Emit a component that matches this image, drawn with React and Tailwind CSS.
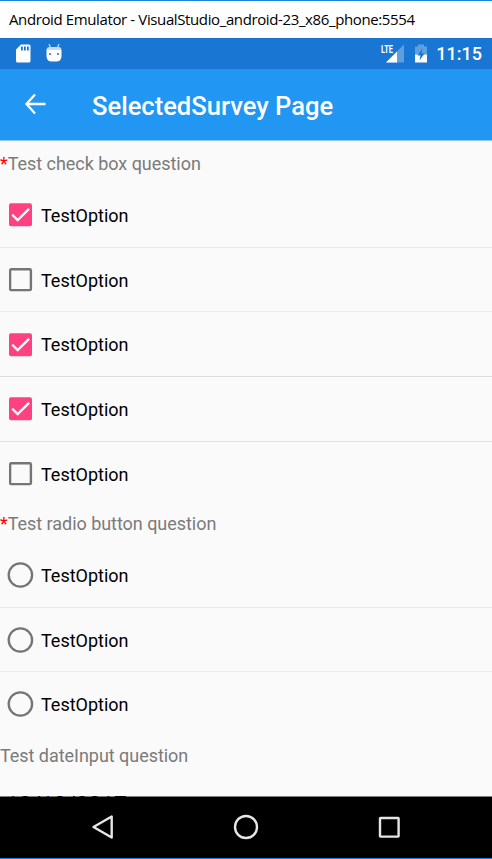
const ROBOTO = "font-[Roboto,sans-serif]";

function CheckBox({ checked }) {
  return (
    <svg className="block h-6 w-6" viewBox="0 0 24 24">
      {checked ? (
        <>
          <rect x="0" y="0.2" width="23" height="23" rx="2" fill="#ff4081" />
          <path d="M3.2 11.6 L8.7 17 L20 5.8" fill="none" stroke="#fafafa" strokeWidth="2.4" />
        </>
      ) : (
        <rect x="1.1" y="1.300" width="20.8" height="20.8" rx="1.2" fill="none" stroke="#757575" strokeWidth="2.4" />
      )}
    </svg>
  );
}

function Radio() {
  return (
    <svg className="block h-[27px] w-[27px]" viewBox="0 0 27 27">
      <circle cx="13.4" cy="13" r="11.700" fill="none" stroke="#757575" strokeWidth="2.3" />
    </svg>
  );
}

function Option({ kind, checked, size, textPad = "pt-5" }) {
  return (
    <div className={`flex shrink-0 items-start ${size}`}>
      <div className={kind === "radio" ? "ml-[7px] mr-[7px] pt-[19px]" : "ml-[9px] mr-2 pt-5"}>
        {kind === "radio" ? <Radio /> : <CheckBox checked={checked} />}
      </div>
      <span className={`text-[18px] leading-[26px] text-black ${textPad}`}>TestOption</span>
    </div>
  );
}

function Question({ required, children }) {
  return (
    <div className="h-[42px] shrink-0 pt-2.5 text-[18px] leading-[26px] tracking-[-0.04px] text-[#7a7a7a]">
      {required && <span className="text-[#ff0000]">*</span>}
      {children}
    </div>
  );
}

export default function App() {
  return (
    <div className={`flex h-[859px] w-[492px] flex-col overflow-hidden border-y border-[#1b84dc] bg-[#fafafa] ${ROBOTO}`}>
      <div className="flex h-[37px] shrink-0 items-center bg-white pl-[9px] font-['Open_Sans',sans-serif] text-[15px] tracking-[-0.38px] text-black">
        <span className="whitespace-nowrap">Android Emulator - VisualStudio_android-23_x86_phone:5554</span>
      </div>

      <div className="flex h-[31px] shrink-0 items-center bg-[#1976d2] pl-[15px] pr-[10px] text-white">
        <svg className="h-5 w-4" viewBox="0 0 16 20" fill="#fff">
          <path fillRule="evenodd" d="M6 0.500H14Q15.500 0.500 15.500 2V17Q15.500 18.500 14 18.500H2.500Q1 18.500 1 17V5.500ZM6 2.500V6.500H7.800V2.500ZM9 2.500V6.500H10.800V2.500ZM12 2.500V6.500H13.800V2.500Z" />
        </svg>
        <svg className="ml-[14px] h-5 w-[18px]" viewBox="0 0 18 20">
          <path d="M4 0L5.500 3.500M14 0L12.500 3.500" stroke="#c5dcf4" strokeWidth="1.200" />
          <path d="M1.500 6Q1.500 3 4.500 3H13.500Q16.500 3 16.500 6Z" fill="#c5dcf4" />
          <path d="M1.500 6H16.500V12Q16.500 17.500 11 17.500H7Q1.500 17.500 1.500 12Z" fill="#fff" />
          <circle cx="5" cy="10" r="1" fill="#1976d2" />
          <circle cx="13" cy="10" r="1" fill="#1976d2" />
        </svg>
        <div className="relative ml-auto h-5 w-[24px]">
          <svg className="block h-5 w-[24px]" viewBox="0 0 24 20">
            <path d="M23 0.500V18.500H5Z" fill="#5e9fe0" />
            <path d="M16 7.500V18.500H5Z" fill="#fff" />
          </svg>
          <span className="absolute -top-px left-0 h-[11px] w-[12px] bg-[#1976d2]">
            <span className="block origin-left scale-x-[0.65] text-[11.5px] font-bold leading-[12px]">LTE</span>
          </span>
        </div>
        <svg className="ml-[9px] h-5 w-[14px]" viewBox="0 0 14 20">
          <path d="M1 2.500H4V0.500H10V2.500H13V10.500H1Z" fill="#5e9fe0" />
          <path d="M1 10.500H13V18.500H1Z" fill="#fff" />
          <path d="M8.500 4.500L3.500 11.500H6.500L5.500 16.500L10.500 9.500H7.500Z" fill="#1976d2" />
        </svg>
        <span className="ml-[8px] text-[18px] font-medium leading-5">11:15</span>
      </div>

      <div className="flex h-[72px] shrink-0 items-center border-b border-[#8fc8f8] bg-[#2196f3] text-white">
        <svg className="mb-[2px] ml-[24px] h-[22px] w-[22px]" viewBox="0 0 22 22" fill="none" stroke="#fff" strokeWidth="2.300">
          <path d="M21.500 11H2.500M11 1.500L2.500 11L11 20.500" />
        </svg>
        <span className="ml-[46px] pt-0.5 text-[25.55px] font-medium leading-8">SelectedSurvey Page</span>
      </div>

      <div className="relative flex min-h-0 grow flex-col overflow-hidden">
        <Question required>Test check box question</Question>
        <Option checked size="h-[65px] border-b border-[#e8e8e8]" />
        <Option size="h-[64px] border-b border-[#ebebeb]" />
        <Option checked size="h-[65px] border-b border-[#dcdcdc] pt-px" textPad="pt-[19px]" />
        <Option checked size="h-[65px] border-b border-[#e2e2e2]" />
        <Option size="h-[59px]" />
        <Question required>Test radio button question</Question>
        <Option kind="radio" size="h-[65px] border-b border-[#e8e8e8]" />
        <Option kind="radio" size="h-[64px] border-b border-[#ebebeb]" />
        <Option kind="radio" size="h-[61px]" />
        <Question>Test dateInput question</Question>
        <div className="shrink-0 pl-[6px] pt-[16px] text-[22.7px] leading-7 text-black">10/10/2017</div>
        {/* shaded edge where the navigation bar covers the scrolling form */}
        <div className="absolute inset-x-0 bottom-0 h-px bg-black/50" />
      </div>

      <div className="flex h-[61px] shrink-0 items-center justify-between bg-black px-[90px] pb-[2px]">
        <svg className="h-[26px] w-[26px]" viewBox="0 0 26 26" fill="none" stroke="#e6e6e6" strokeWidth="2.400" strokeLinejoin="round">
          <path d="M21.700 2.500V23.500L3.500 13Z" />
        </svg>
        <svg className="h-[26px] w-[26px]" viewBox="0 0 26 26" fill="none" stroke="#e6e6e6" strokeWidth="2.400">
          <circle cx="13" cy="13" r="11" />
        </svg>
        <svg className="h-[26px] w-[26px]" viewBox="0 0 26 26" fill="none" stroke="#e6e6e6" strokeWidth="2.400">
          <rect x="4" y="4" width="18.600" height="18.600" rx="0.500" />
        </svg>
      </div>
    </div>
  );
}
